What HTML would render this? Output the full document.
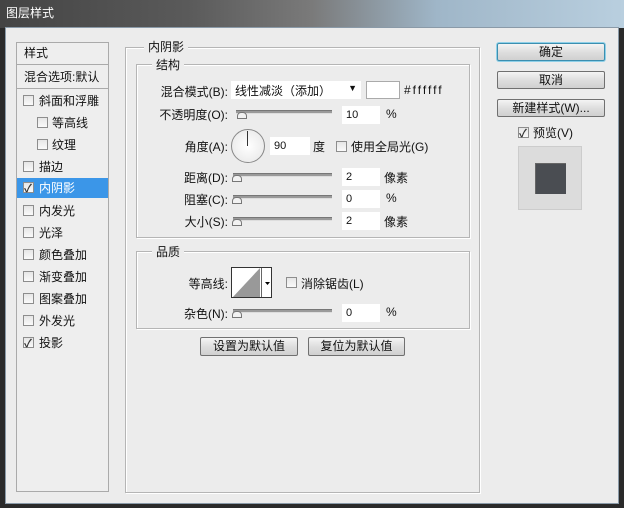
<!DOCTYPE html>
<html><head><meta charset="utf-8"><style>
*{margin:0;padding:0;box-sizing:border-box}
body{width:624px;height:508px;overflow:hidden;position:relative;font-family:"Liberation Sans","Noto Sans CJK SC",sans-serif;font-size:12px;color:#111;background:#2a2a2a}
.a{position:absolute}
.title{left:0;top:0;width:624px;height:28px;background:linear-gradient(90deg,#444 0%,#5a5a5a 30%,#7a7a7a 50%,#9fb6c8 70%,#b9cfdf 100%)}
.dlg{left:5px;top:27px;width:614px;height:477px;background:#ececec;border:1px solid #8a9aa8}
.cb{width:11px;height:11px;border:1px solid #8d8d8d;background:linear-gradient(#e6e6e6,#fafafa)}
.ck::after{content:"✓";position:absolute;left:0px;top:-3px;font-size:11px;color:#333;font-weight:bold}
.grp{border:1px solid #b5b5b5;box-shadow:1px 1px 0 #fff inset,1px 1px 0 #fff}
.lbl{background:#ececec;padding:0 4px}
.sl{height:4px;background:#9a9a9a;border-top:1px solid #777;border-bottom:1px solid #ddd}
.th{width:10px;height:7px;border:1px solid #777;border-radius:4px 4px 0 0;background:#f2f2f2}
.in{background:#fff;height:18px;padding:3px 4px 0;font-size:11px}
.btn{border:1px solid #707070;border-radius:2px;background:linear-gradient(#f4f4f4,#dedede 50%,#d0d0d0);text-align:center;font-size:12px;line-height:16px}
.r{text-align:right}
</style></head><body>
<div class="a title"></div>
<div class="a" style="left:6px;top:4px;color:#fff;font-size:12px">图层样式</div>
<div class="a dlg"></div>

<div class="a" style="left:16px;top:42px;width:93px;height:450px;background:#eee;border:1px solid #aaa"></div>
<div class="a" style="left:17px;top:64px;width:91px;height:1px;background:#aaa"></div>
<div class="a" style="left:17px;top:88px;width:91px;height:1px;background:#aaa"></div>
<div class="a" style="left:24px;top:44px">样式</div>
<div class="a" style="left:24px;top:68px">混合选项:默认</div>
<div class="a" style="left:17px;top:178px;width:91px;height:20px;background:#3b96e8"></div>
<div class="a cb" style="left:23px;top:95px"></div><div class="a" style="left:39px;top:92px">斜面和浮雕</div>
<div class="a cb" style="left:37px;top:117px"></div><div class="a" style="left:52px;top:114px">等高线</div>
<div class="a cb" style="left:37px;top:139px"></div><div class="a" style="left:52px;top:136px">纹理</div>
<div class="a cb" style="left:23px;top:161px"></div><div class="a" style="left:39px;top:158px">描边</div>
<div class="a cb ck" style="left:23px;top:182px"></div><div class="a" style="left:39px;top:179px;color:#fff">内阴影</div>
<div class="a cb" style="left:23px;top:205px"></div><div class="a" style="left:39px;top:202px">内发光</div>
<div class="a cb" style="left:23px;top:227px"></div><div class="a" style="left:39px;top:224px">光泽</div>
<div class="a cb" style="left:23px;top:249px"></div><div class="a" style="left:39px;top:246px">颜色叠加</div>
<div class="a cb" style="left:23px;top:271px"></div><div class="a" style="left:39px;top:268px">渐变叠加</div>
<div class="a cb" style="left:23px;top:293px"></div><div class="a" style="left:39px;top:290px">图案叠加</div>
<div class="a cb" style="left:23px;top:315px"></div><div class="a" style="left:39px;top:312px">外发光</div>
<div class="a cb ck" style="left:23px;top:337px"></div><div class="a" style="left:39px;top:334px">投影</div>

<div class="a grp" style="left:125px;top:47px;width:355px;height:446px"></div>
<div class="a lbl" style="left:144px;top:38px">内阴影</div>
<div class="a grp" style="left:136px;top:64px;width:334px;height:174px"></div>
<div class="a lbl" style="left:152px;top:56px">结构</div>

<div class="a r" style="left:140px;top:83px;width:88px">混合模式(B):</div>
<div class="a in" style="left:231px;top:81px;width:130px;font-size:12px;padding-top:1px">线性减淡（添加）<span style="position:absolute;right:4px;top:2px;font-size:9px">▼</span></div>
<div class="a" style="left:366px;top:81px;width:34px;height:18px;background:#fff;border:1px solid #aaa"></div>
<div class="a" style="left:404px;top:83px;font-size:12px;letter-spacing:2px">#ffffff</div>

<div class="a r" style="left:140px;top:106px;width:88px">不透明度(O):</div>
<div class="a sl" style="left:236px;top:110px;width:96px"></div><div class="a th" style="left:237px;top:112px"></div>
<div class="a in" style="left:342px;top:106px;width:38px">10</div><div class="a" style="left:386px;top:107px">%</div>

<div class="a r" style="left:140px;top:138px;width:88px">角度(A):</div>
<div class="a" style="left:231px;top:129px;width:34px;height:34px;border-radius:50%;border:1px solid #888;background:radial-gradient(#fff,#e5e5e5)"></div>
<div class="a" style="left:247px;top:131px;width:1px;height:15px;background:#333"></div>
<div class="a in" style="left:270px;top:137px;width:40px">90</div><div class="a" style="left:313px;top:138px">度</div>
<div class="a cb" style="left:336px;top:141px"></div><div class="a" style="left:351px;top:138px">使用全局光(G)</div>

<div class="a r" style="left:140px;top:169px;width:88px">距离(D):</div>
<div class="a sl" style="left:233px;top:173px;width:99px"></div><div class="a th" style="left:232px;top:175px"></div>
<div class="a in" style="left:342px;top:168px;width:38px">2</div><div class="a" style="left:384px;top:169px">像素</div>
<div class="a r" style="left:140px;top:191px;width:88px">阻塞(C):</div>
<div class="a sl" style="left:233px;top:195px;width:99px"></div><div class="a th" style="left:232px;top:197px"></div>
<div class="a in" style="left:342px;top:190px;width:38px">0</div><div class="a" style="left:386px;top:191px">%</div>
<div class="a r" style="left:140px;top:213px;width:88px">大小(S):</div>
<div class="a sl" style="left:233px;top:217px;width:99px"></div><div class="a th" style="left:232px;top:219px"></div>
<div class="a in" style="left:342px;top:212px;width:38px">2</div><div class="a" style="left:384px;top:213px">像素</div>

<div class="a grp" style="left:136px;top:251px;width:334px;height:78px"></div>
<div class="a lbl" style="left:152px;top:243px">品质</div>
<div class="a r" style="left:140px;top:275px;width:88px">等高线:</div>
<div class="a" style="left:231px;top:267px;width:41px;height:31px;border:1px solid #333;background:#fff;overflow:hidden">
<svg width="41" height="31" style="position:absolute;left:0;top:0"><polygon points="0,30 28,0 28,30" fill="#999"/><line x1="29.5" y1="0" x2="29.5" y2="31" stroke="#666"/><polygon points="33,14 38,14 35.5,17" fill="#000"/></svg></div>
<div class="a cb" style="left:286px;top:277px"></div><div class="a" style="left:301px;top:275px">消除锯齿(L)</div>
<div class="a r" style="left:140px;top:305px;width:88px">杂色(N):</div>
<div class="a sl" style="left:233px;top:309px;width:99px"></div><div class="a th" style="left:232px;top:311px"></div>
<div class="a in" style="left:342px;top:304px;width:38px">0</div><div class="a" style="left:386px;top:305px">%</div>

<div class="a btn" style="left:200px;top:337px;width:98px;height:19px">设置为默认值</div>
<div class="a btn" style="left:308px;top:337px;width:97px;height:19px">复位为默认值</div>

<div class="a btn" style="left:497px;top:43px;width:108px;height:18px;border-color:#3c8fb0;box-shadow:0 0 0 1px #8fd0e8">确定</div>
<div class="a btn" style="left:497px;top:71px;width:108px;height:18px">取消</div>
<div class="a btn" style="left:497px;top:99px;width:108px;height:18px">新建样式(W)...</div>
<div class="a cb ck" style="left:518px;top:127px"></div><div class="a" style="left:533px;top:124px">预览(V)</div>
<div class="a" style="left:518px;top:146px;width:64px;height:64px;background:#dcdcdc;border:1px solid #ccc"></div>
<div class="a" style="left:535px;top:163px;width:31px;height:31px;background:#4a4d52;box-shadow:1px 1px 0 #666 inset"></div>
</body></html>
